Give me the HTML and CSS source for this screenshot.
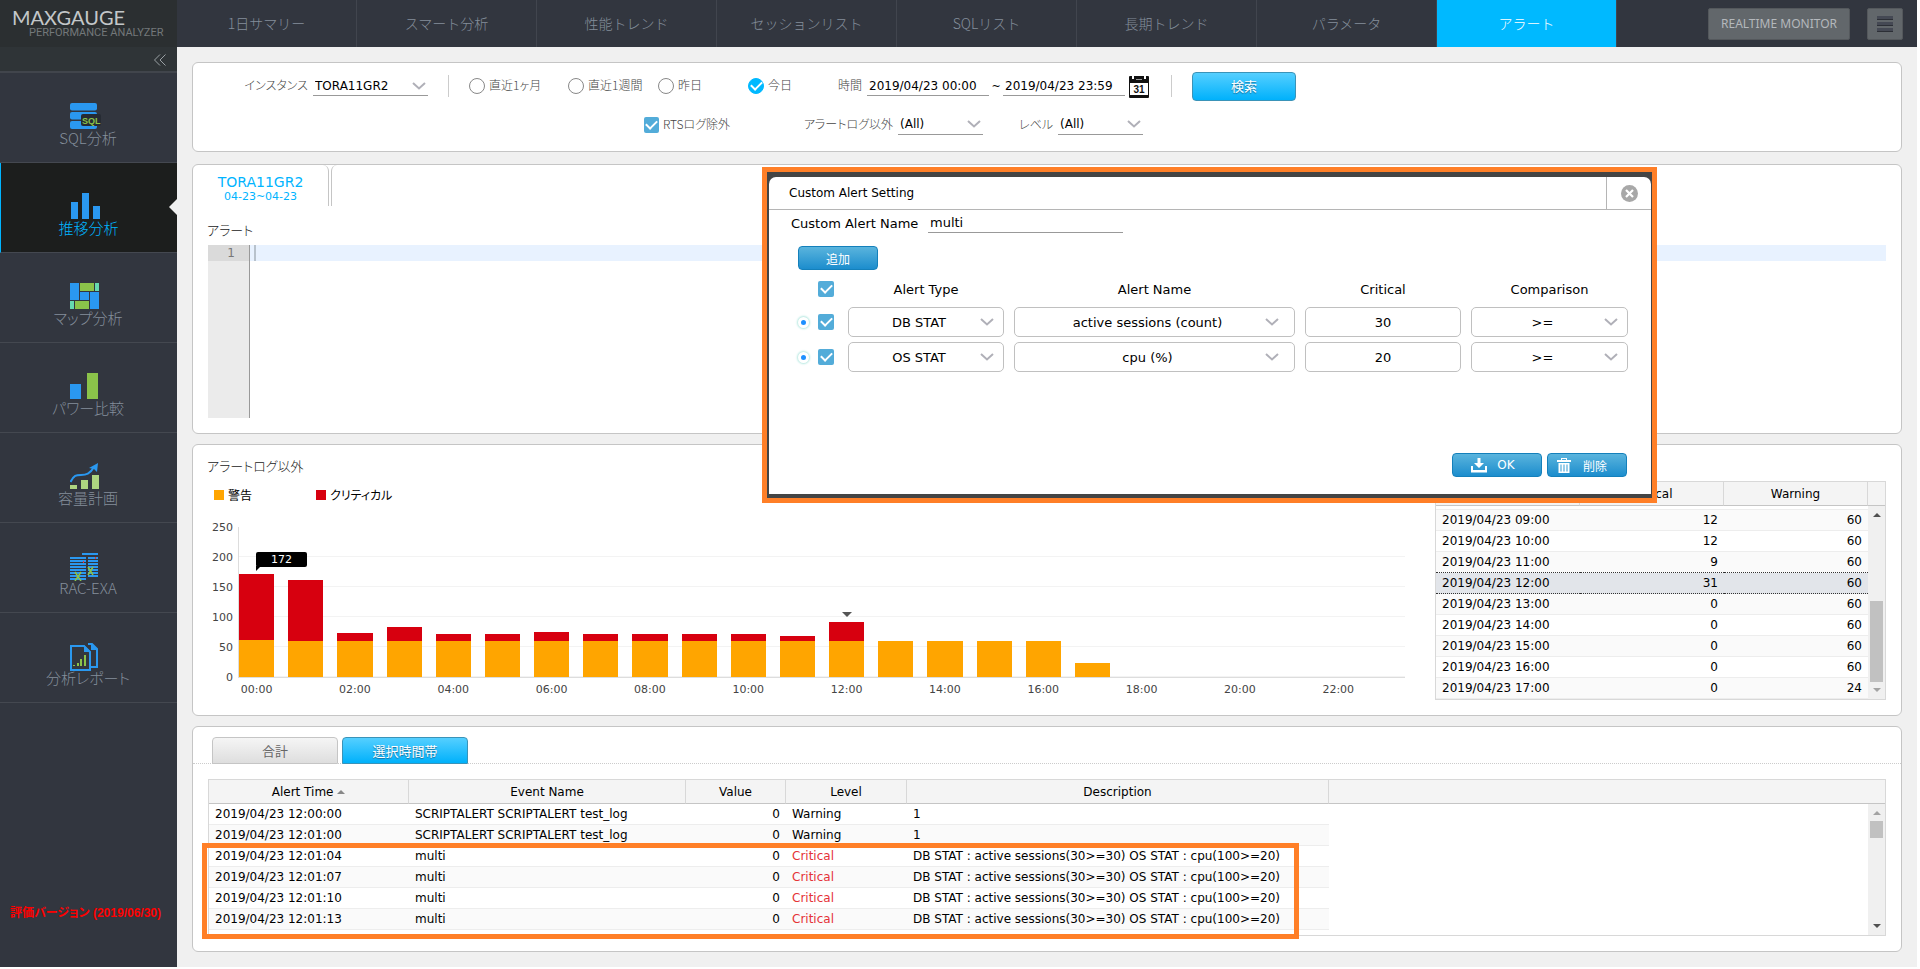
FILE: index.html
```
<!DOCTYPE html>
<html lang="ja">
  <head>
    <meta charset="UTF-8" />
    <meta name="viewport" content="width=device-width, initial-scale=1.0" />
    <title>MAXGAUGE Performance Analyzer</title>
    <link rel="stylesheet" href="styles.css">
  </head>
  <body>
    <div class="app">
      <aside class="sidebar">
        <div class="logo">
          <div class="logo-name">MAXGAUGE</div>
          <div class="logo-sub">PERFORMANCE ANALYZER</div>
        </div>
        <div class="collapse">
          <button class="collapse-button" aria-label="collapse">
            <svg width="12" height="12" viewBox="0 0 12 12" fill="none" stroke="#9aa0a4"><path d="M6 0.5L0.5 6L6 11.5M11.5 0.5L6 6L11.5 11.5" /></svg>
          </button>
        </div>
        <nav class="side-menu">
          <a href="#" class="side-item">
            <svg width="36" height="28" viewBox="0 0 36 28">
              <rect width="27" height="7.500" rx="2" fill="#2a98f0" />
              <rect y="9" width="27" height="7.500" rx="2" fill="#2a98f0" />
              <rect y="18" width="27" height="8" rx="2" fill="#2a98f0" />
              <rect x="11" y="11" width="20" height="12" rx="2" fill="#262b33" />
              <text x="12" y="21" font-size="9" font-family="Liberation Sans" font-weight="bold" fill="#8bc34a">SQL</text>
            </svg>
            SQL分析
          </a>
          <a href="#" class="side-item active">
            <svg width="36" height="28" viewBox="0 0 36 28" fill="#2a98f0">
              <rect y="9" width="7" height="17" /><rect x="11" width="7" height="26" /><rect x="22" y="13" width="7" height="13" />
            </svg>
            推移分析
          </a>
          <a href="#" class="side-item">
            <svg width="36" height="28" viewBox="0 0 36 28">
              <path fill="#2a98f0" d="M0 0h9v17H0zM10 9h9v8h-9zM20 9h9v17h-9z" />
              <path fill="#8bc34a" d="M10 0h14v8H10zM5 18h14v8H5z" />
              <path fill="#66d9b0" d="M25 0h4v8h-4zM0 18h4v8H0z" />
            </svg>
            マップ分析
          </a>
          <a href="#" class="side-item">
            <svg width="36" height="28" viewBox="0 0 36 28">
              <rect y="11" width="11" height="15" fill="#2a98f0" /><rect x="17" width="11" height="26" fill="#8bc34a" />
            </svg>
            パワー比較
          </a>
          <a href="#" class="side-item">
            <svg width="36" height="28" viewBox="0 0 36 28">
              <path fill="#aed581" d="M0 22h7v4H0zM11 17h7v9h-7zM22 12h7v14h-7z" />
              <path fill="none" stroke="#2a98f0" stroke-width="2" d="M0.500 19C4 12 6 12 11 12S20 11 24 4" />
              <path fill="#2a98f0" d="M28 0L27 9L24 6L19 5z" />
            </svg>
            容量計画
          </a>
          <a href="#" class="side-item">
            <svg width="36" height="28" viewBox="0 0 36 28">
              <path fill="#2a98f0" d="M12 0h16v2H12zM0 4h16v2H0zM0 7h16v2H0zM0 10h16v2H0zM0 13h16v2H0zM0 16h16v2H0zM0 19h16v2H0zM0 22h16v2H0zM0 25h16v2H0zM18 4h10v2H18zM18 7h10v2H18zM18 10h10v2H18zM18 13h10v2H18zM18 16h10v2H18zM18 19h10v2H18zM18 22h10v2H18z" />
              <path fill="none" stroke="#8bc34a" stroke-width="1.500" d="M5 19l6 9M11 19l-6 9M18 14l5 8M23 14l-5 8" />
              <path fill="#e53935" d="M13 8h1v2h-1zM25 4h1v2h-1z" />
            </svg>
            RAC-EXA
          </a>
          <a href="#" class="side-item">
            <svg width="36" height="28" viewBox="0 0 36 28">
              <path fill="none" stroke="#2a98f0" stroke-width="2" d="M1 3h13l6 6v18H1zM18 1h4l5 5v18h-6" />
              <path fill="#2a98f0" d="M14 2v7h7zM21 0v7h7z" />
              <path fill="#8bc34a" d="M3 22h2v1H3zM7 20h2v3H7zM10 16h2v7h-2zM14 12h2v11h-2z" />
            </svg>
            分析レポート
          </a>
        </nav>
        <p class="license">評価バージョン (2019/06/30)</p>
      </aside>

      <div class="content">
        <header class="topbar">
          <nav class="tabs">
            <a href="#">1日サマリー</a>
            <a href="#">スマート分析</a>
            <a href="#">性能トレンド</a>
            <a href="#">セッションリスト</a>
            <a href="#">SQLリスト</a>
            <a href="#">長期トレンド</a>
            <a href="#">パラメータ</a>
            <a href="#" class="active">アラート</a>
          </nav>
          <button class="top-button">REALTIME MONITOR</button>
          <button class="top-button menu-button" aria-label="menu"><i></i><i></i><i></i></button>
        </header>

        <main class="panels">
          <form class="panel filter">
            <div class="filter-row">
              <label class="filter-label first-label" for="instance">インスタンス</label>
              <select id="instance" class="line-select instance"><option>TORA11GR2</option></select>
              <span class="divider"></span>
              <label class="radio month"><input type="radio" name="range" /><span>直近1ヶ月</span></label>
              <label class="radio"><input type="radio" name="range" /><span>直近1週間</span></label>
              <label class="radio"><input type="radio" name="range" /><span>昨日</span></label>
              <label class="radio"><input type="radio" name="range" checked /><span>今日</span></label>
              <label class="filter-label" for="from">時間</label>
              <input id="from" class="line-input" value="2019/04/23 00:00" />
              <span class="tilde">~</span>
              <input aria-label="to" class="line-input to" value="2019/04/23 23:59" />
              <button type="button" class="calendar" aria-label="calendar">
                <svg width="20" height="23" viewBox="0 0 20 23">
                  <rect y="1" width="20" height="22" rx="1" fill="#111" />
                  <rect x="1" y="8" width="18" height="12" fill="#fff" />
                  <path fill="#fff" d="M3 0h2v4H3zM15 0h2v4h-2z" />
                  <path fill="#999" d="M7 4h6v1H7z" />
                  <text x="10" y="18" font-size="10" font-weight="bold" font-family="Liberation Sans" text-anchor="middle" fill="#111">31</text>
                </svg>
              </button>
              <span class="divider"></span>
              <button type="button" class="search-button">検索</button>
            </div>
            <div class="filter-row second">
              <label class="check rts"><input type="checkbox" checked /><span>RTSログ除外</span></label>
              <label class="filter-label log-label" for="log">アラートログ以外</label>
              <select id="log" class="line-select small"><option>(All)</option></select>
              <label class="filter-label level-label" for="level">レベル</label>
              <select id="level" class="line-select small"><option>(All)</option></select>
            </div>
          </form>

          <section class="panel alert-panel">
            <div class="instance-tabs">
              <a href="#" class="instance-tab">TORA11GR2<small>04-23~04-23</small></a>
              <span class="instance-rest"></span>
            </div>
            <h2>アラート</h2>
            <div class="editor">
              <div class="gutter"><span>1</span></div>
              <div class="code"><div class="active-line"></div></div>
            </div>
          </section>

          <section class="panel chart-panel">
            <div class="chart">
              <h2>アラートログ以外</h2>
              <div class="legend"><span class="warning">警告</span><span class="critical">クリティカル</span></div>
              <div class="chart-area">
                <div class="y-axis"><span>250</span><span>200</span><span>150</span><span>100</span><span>50</span><span>0</span></div>
                <div class="plot" id="plot"></div>
                <div class="x-axis" id="xAxis"></div>
              </div>
            </div>
            <div class="grid hour-grid">
              <table>
                <thead><tr><th>Time</th><th>Critical</th><th>Warning</th></tr></thead>
                <tbody>
                  <tr class="cut"><td></td><td></td><td></td></tr>
                  <tr><td>2019/04/23 09:00</td><td>12</td><td>60</td></tr>
                  <tr><td>2019/04/23 10:00</td><td>12</td><td>60</td></tr>
                  <tr><td>2019/04/23 11:00</td><td>9</td><td>60</td></tr>
                  <tr class="selected"><td>2019/04/23 12:00</td><td>31</td><td>60</td></tr>
                  <tr><td>2019/04/23 13:00</td><td>0</td><td>60</td></tr>
                  <tr><td>2019/04/23 14:00</td><td>0</td><td>60</td></tr>
                  <tr><td>2019/04/23 15:00</td><td>0</td><td>60</td></tr>
                  <tr><td>2019/04/23 16:00</td><td>0</td><td>60</td></tr>
                  <tr><td>2019/04/23 17:00</td><td>0</td><td>24</td></tr>
                </tbody>
              </table>
              <div class="scroll">
                <div class="scroll-head"></div>
                <div class="scroll-track at-end"><i class="up"></i><b></b><i class="down"></i></div>
              </div>
            </div>
          </section>

          <section class="panel log-panel">
            <div class="log-tabs">
              <button class="log-tab">合計</button>
              <button class="log-tab active">選択時間帯</button>
            </div>
            <div class="grid log-grid">
              <table>
                <thead>
                  <tr><th class="c-time">Alert Time <i class="sort"></i></th><th class="c-event">Event Name</th><th class="c-value">Value</th><th class="c-level">Level</th><th class="c-desc">Description</th><th class="rest"></th></tr>
                </thead>
                <tbody>
                  <tr><td>2019/04/23 12:00:00</td><td>SCRIPTALERT SCRIPTALERT test_log</td><td>0</td><td>Warning</td><td>1</td><td class="rest"></td></tr>
                  <tr><td>2019/04/23 12:01:00</td><td>SCRIPTALERT SCRIPTALERT test_log</td><td>0</td><td>Warning</td><td>1</td><td class="rest"></td></tr>
                  <tr class="crit"><td>2019/04/23 12:01:04</td><td>multi</td><td>0</td><td>Critical</td><td>DB STAT : active sessions(30&gt;=30) OS STAT : cpu(100&gt;=20)</td><td class="rest"></td></tr>
                  <tr class="crit"><td>2019/04/23 12:01:07</td><td>multi</td><td>0</td><td>Critical</td><td>DB STAT : active sessions(30&gt;=30) OS STAT : cpu(100&gt;=20)</td><td class="rest"></td></tr>
                  <tr class="crit"><td>2019/04/23 12:01:10</td><td>multi</td><td>0</td><td>Critical</td><td>DB STAT : active sessions(30&gt;=30) OS STAT : cpu(100&gt;=20)</td><td class="rest"></td></tr>
                  <tr class="crit"><td>2019/04/23 12:01:13</td><td>multi</td><td>0</td><td>Critical</td><td>DB STAT : active sessions(30&gt;=30) OS STAT : cpu(100&gt;=20)</td><td class="rest"></td></tr>
                </tbody>
              </table>
              <div class="scroll">
                <div class="scroll-head"></div>
                <div class="scroll-track"><i class="up"></i><b></b><i class="down"></i></div>
              </div>
              <div class="highlight"></div>
            </div>
          </section>
        </main>
      </div>

      <!-- Custom alert dialog -->
      <div class="dialog-frame">
        <form class="dialog" role="dialog" aria-labelledby="dialogTitle">
          <div class="dialog-head">
            <span id="dialogTitle">Custom Alert Setting</span>
            <button type="button" class="close" aria-label="close">
              <svg width="17" height="17" viewBox="0 0 17 17"><circle cx="8.500" cy="8.500" r="8.500" fill="#a8a8a8" /><path stroke="#fff" stroke-width="2.200" d="M5 5l7 7M12 5l-7 7" /></svg>
            </button>
          </div>
          <div class="dialog-body">
            <div class="name-row">
              <label for="alertName">Custom Alert Name</label>
              <input id="alertName" class="line-input" value="multi" />
            </div>
            <div class="dialog-content">
              <button type="button" class="blue-button add">追加</button>
              <div class="rule-row rule-head">
                <span></span>
                <input type="checkbox" aria-label="all" checked />
                <span>Alert Type</span><span>Alert Name</span><span>Critical</span><span>Comparison</span>
              </div>
              <div class="rule-row">
                <span class="dot"></span>
                <input type="checkbox" aria-label="rule 1" checked />
                <select class="box" aria-label="Alert Type"><option>DB STAT</option></select>
                <select class="box wide" aria-label="Alert Name"><option>active sessions (count)</option></select>
                <input class="box" aria-label="Critical" value="30" />
                <select class="box" aria-label="Comparison"><option>&gt;=</option></select>
              </div>
              <div class="rule-row">
                <span class="dot"></span>
                <input type="checkbox" aria-label="rule 2" checked />
                <select class="box" aria-label="Alert Type"><option>OS STAT</option></select>
                <select class="box wide" aria-label="Alert Name"><option>cpu (%)</option></select>
                <input class="box" aria-label="Critical" value="20" />
                <select class="box" aria-label="Comparison"><option>&gt;=</option></select>
              </div>
            </div>
            <div class="dialog-actions">
              <button type="button" class="blue-button ok">
                <svg width="16" height="15" viewBox="0 0 16 15" fill="#fff"><path d="M6.500 0h3v5H13L8 10L3 5h3.500zM0 8h2v4h12V8h2v6.500H0z" /></svg>
                OK
              </button>
              <button type="button" class="blue-button delete">
                <svg width="14" height="15" viewBox="0 0 14 15" fill="#fff"><path d="M4 0h6v2h4v2H0V2h4zM5 1v1h4V1zM1.500 5h11v10h-11zM3.500 6.500v7h1v-7zM6.500 6.500v7h1v-7zM9.500 6.500v7h1v-7z" fill-rule="evenodd" /></svg>
                削除
              </button>
            </div>
          </div>
        </form>
      </div>
    </div>
    <script src="script.js"></script>
  </body>
</html>
```
FILE: styles.css
```
* {
  box-sizing: border-box;
}

body {
  margin: 0;
  background: #fff;
  color: #000;
  font: 11px "DejaVu Sans", "Noto Sans CJK JP", sans-serif;
}

button,
input,
select {
  font: inherit;
  color: inherit;
  margin: 0;
}

button {
  padding: 0;
  border: none;
  background: none;
  cursor: pointer;
}

a {
  color: inherit;
  text-decoration: none;
}

h2 {
  margin: 0;
  font-size: 13px;
  line-height: 20px;
  font-weight: 300;
  color: #222;
}

.app {
  position: relative;
  display: flex;
  margin: 0 3px 2px 0;
  min-height: calc(100vh - 2px);
  background: #f0f0f0;
}

/* proportional kana */
body .app * {
  font-feature-settings: "palt";
}

/* Sidebar */
.sidebar {
  flex: none;
  display: flex;
  flex-direction: column;
  width: 177px;
  background: #32363f;
}

.logo {
  height: 47px;
  padding: 7px 0 0 12px;
  background: #2b2f31;
  color: #c3c7c9;
}

.logo-name {
  font: 20px/20px Lato, sans-serif;
}

.logo-sub {
  padding-left: 17px;
  font: 11px/12px Roboto, sans-serif;
  color: #73787a;
}

.collapse {
  height: 26px;
  padding: 7px 11px 0 0;
  text-align: right;
  background: #2f3437;
  border-bottom: 2px solid #41454c;
}

.collapse-button {
  display: block;
  margin-left: auto;
}

.side-item {
  position: relative;
  display: flex;
  flex-direction: column;
  align-items: center;
  height: 90px;
  padding-top: 30px;
  padding-right: 1px;
  border-bottom: 1px solid #444850;
  color: #848e9b;
  font: 300 15px/20px "Noto Sans CJK JP", sans-serif;
}

.side-item svg {
  flex: none;
  margin-bottom: -3px;
}

.side-item.active {
  background: #1c1e1d;
  border-left: 1px solid #00b4ff;
  color: #00b4ff;
}

.side-item.active::after {
  content: "";
  position: absolute;
  right: 0;
  top: 36px;
  border: 8px solid transparent;
  border-left: none;
  border-right-color: #f0f0f0;
}

.license {
  margin: auto 0 46px 10px;
  font: bold 12px/16px "Liberation Sans", "Noto Sans CJK JP", sans-serif;
  color: #f00;
}

/* Top bar */
.content {
  flex: 1;
  min-width: 0;
}

.topbar {
  display: flex;
  align-items: center;
  height: 47px;
  padding-right: 14px;
  background: #32363f;
}

.tabs {
  display: flex;
  margin-right: auto;
}

.tabs a {
  width: 180px;
  border-right: 1px solid #41454e;
  font: 300 14px/46px "Noto Sans CJK JP", sans-serif;
  height: 47px;
  text-align: center;
  color: #848e9b;
}

.tabs a.active {
  background: #00b9ff;
  color: #fff;
}

.top-button {
  height: 32px;
  width: 142px;
  border: 1px solid #54585c;
  border-radius: 2px;
  background: #62676b;
  color: #b4b8bc;
  font: 12px "Noto Sans", sans-serif;
}

.menu-button {
  width: 36px;
  margin-left: 17px;
}

.menu-button i {
  display: block;
  width: 16px;
  height: 4px;
  margin: 2px auto;
  background: #454954;
  border-bottom: 1px solid #2c2f36;
}

/* Panels */
.panels {
  padding: 15px 15px 0;
}

.panel {
  border: 1px solid #c5c5c5;
  border-radius: 6px;
  background: #fff;
}

.filter {
  height: 90px;
  padding-top: 8px;
  margin-bottom: 12px;
}

.filter-row {
  display: flex;
  align-items: center;
  height: 30px;
}

.filter-row.second {
  height: 25px;
  margin-top: 11px;
}

.filter-label,
.radio,
.check {
  font: 300 12px/16px "Noto Sans CJK JP", sans-serif;
  color: #444;
  white-space: nowrap;
}

.filter-label,
.radio span,
.check span {
  margin-bottom: 2px;
}

.filter-label {
  margin-right: 5px;
  text-align: right;
}

.first-label {
  width: 115px;
}

.line-select,
.line-input {
  height: 20px;
  padding: 0 2px;
  border: none;
  border-bottom: 1px solid #999;
  border-radius: 0;
  background: transparent;
  outline: none;
  font-size: 12px;
}

.line-input {
  width: 122px;
}

select {
  appearance: none;
  outline: none;
}

.line-select,
select.box {
  background: #fff url("data:image/svg+xml,%3Csvg xmlns='http://www.w3.org/2000/svg' width='14' height='8' fill='none' stroke='%23b0b0b8' stroke-width='2'%3E%3Cpath d='M1 1l6 5.500l6-5.500'/%3E%3C/svg%3E") no-repeat right 2px center;
}

.instance {
  width: 115px;
}

.small {
  width: 85px;
}

.divider {
  width: 1px;
  height: 22px;
  margin: 0 20px;
  background: #ccc;
}

.radio {
  display: flex;
  align-items: center;
  gap: 4px;
  width: 90px;
}

.radio.month {
  width: 99px;
}

input[type="radio"] {
  appearance: none;
  width: 16px;
  height: 16px;
  border: 1px solid #888;
  border-radius: 50%;
  background: #fff;
}

input[type="radio"]:checked {
  border-color: #00b9ff;
  background: #00b9ff;
}

input[type="checkbox"] {
  appearance: none;
  width: 16px;
  height: 16px;
  border-radius: 2px;
  background: #53acd9;
}

input[type="checkbox"]:checked,
input[type="radio"]:checked {
  display: grid;
  place-items: center;
}

input[type="checkbox"]:checked::after,
input[type="radio"]:checked::after {
  content: "";
  width: 9px;
  height: 5px;
  margin-bottom: 3px;
  border: solid #fff;
  border-width: 0 0 2px 2px;
  transform: rotate(-45deg);
}

.check {
  display: flex;
  align-items: center;
  gap: 4px;
}

.rts {
  width: 86px;
  margin-left: 451px;
}

.log-label {
  width: 163px;
}

.level-label {
  width: 70px;
}

.tilde {
  width: 14px;
  text-align: center;
}

.calendar {
  display: flex;
  margin: 0 2px 0 4px;
}

.search-button {
  width: 104px;
  height: 29px;
  padding-bottom: 2px;
  border: 1px solid #3a93b8;
  border-radius: 4px;
  background: linear-gradient(#55cfff, #00b1fb);
  color: #fff;
  font: 13px "Noto Sans CJK JP", sans-serif;
  text-shadow: 0 1px 1px #1b6f99;
}

.alert-panel {
  height: 270px;
  margin-bottom: 10px;
}

.instance-tabs {
  display: flex;
  gap: 2px;
  height: 41px;
}

.instance-tab {
  width: 136px;
  padding-top: 9px;
  border-right: 1px solid #c5c5c5;
  border-top-right-radius: 6px;
  text-align: center;
  font-size: 14px;
  line-height: 16px;
  color: #00b4ff;
}

.instance-tab small {
  display: block;
  font-size: 11px;
  line-height: 14px;
}

.instance-rest {
  flex: 1;
  border-left: 1px solid #c5c5c5;
  border-top-left-radius: 6px;
}

.alert-panel h2 {
  margin: 15px 0 4px 14px;
}

.editor {
  display: flex;
  height: 173px;
  margin: 0 15px;
}

.gutter {
  width: 42px;
  border-right: 1px solid #999;
  background: #ebebeb;
}

.gutter span {
  display: block;
  padding-right: 14px;
  background: #dadada;
  color: #777;
  text-align: right;
  font-size: 12px;
  line-height: 16px;
}

.code {
  flex: 1;
}

.active-line {
  height: 16px;
  padding-left: 4px;
  background: #e8f2ff;
}

.active-line::before {
  content: "";
  display: block;
  width: 2px;
  height: 16px;
  background: #b8c2cc;
}

/* Chart */
.chart-panel {
  display: flex;
  align-items: flex-start;
  height: 272px;
  margin-bottom: 10px;
  padding-right: 15px;
}

.chart {
  flex: 1;
  padding: 12px 30px 0 14px;
}

.legend {
  display: flex;
  height: 18px;
  margin: 9px 0 23px 7px;
  font: 12px/18px "Noto Sans CJK JP", sans-serif;
}

.legend span {
  display: flex;
  align-items: center;
  gap: 4px;
  width: 102px;
}

.legend span::before {
  content: "";
  width: 10px;
  height: 10px;
  background: #ffa500;
}

.legend .critical::before {
  background: #d7000f;
}

.chart-area {
  display: grid;
  grid-template-columns: 26px 1fr;
  column-gap: 5px;
  color: #444;
}

.y-axis {
  display: flex;
  flex-direction: column;
  justify-content: space-between;
  height: 164px;
  margin: -6px 0 -7px;
  text-align: right;
  line-height: 14px;
}

.plot {
  display: grid;
  grid-template-columns: repeat(24, 1fr);
  gap: 14px;
  height: 151px;
  border-left: 1px solid #ddd;
  border-bottom: 1px solid #ddd;
  background: linear-gradient(transparent 29px, #f3f3f3 29px) 0 0 / 100% 30px;
}

.bar {
  position: relative;
  display: flex;
  flex-direction: column;
  justify-content: flex-end;
}

.bar .critical {
  background: #d7000f;
}

.bar .warning {
  background: #ffa500;
}

.tip {
  position: absolute;
  left: 17px;
  top: 25px;
  width: 51px;
  border-radius: 2px;
  background: #000;
  color: #fff;
  line-height: 15px;
  text-align: center;
}

.tip::after {
  content: "";
  position: absolute;
  left: 0;
  top: 14px;
  border-top: 5px solid #000;
  border-right: 5px solid transparent;
}

.marker {
  align-self: center;
  margin-bottom: 5px;
  border: 5px solid transparent;
  border-top-color: #555;
  border-bottom: none;
}

.x-axis {
  grid-column: 2;
  display: grid;
  grid-template-columns: repeat(24, 1fr);
  gap: 14px;
  padding: 5px 0 0 1px;
  line-height: 14px;
}

.x-axis span {
  display: flex;
  justify-content: center;
  min-width: 0;
  white-space: nowrap;
}

/* Grids */
.grid {
  position: relative;
  display: flex;
  border: 1px solid #d8d8d8;
  font-size: 12px;
}

.grid table {
  width: 100%;
  table-layout: fixed;
  border-collapse: separate;
  border-spacing: 0;
}

.grid th {
  height: 24px;
  padding: 0;
  background: #f4f4f4;
  border-right: 1px solid #d8d8d8;
  border-bottom: 1px solid #c5c5c5;
  font-weight: normal;
}

.grid td {
  height: 21px;
  padding: 0 6px;
  border-bottom: 1px solid #ededed;
  line-height: 16px;
  white-space: nowrap;
}

.scroll {
  flex: none;
  display: flex;
  flex-direction: column;
  width: 17px;
}

.scroll-head {
  height: 24px;
  border-bottom: 1px solid #c5c5c5;
  background: #f4f4f4;
}

.scroll-track {
  flex: 1;
  display: flex;
  flex-direction: column;
  align-items: center;
  background: #f0f0f0;
}

.scroll-track b {
  width: 13px;
  height: 17px;
  margin-top: 6px;
  background: #c1c1c1;
}

.scroll-track i {
  border: 4px solid transparent;
}

.scroll-track .up {
  margin-top: 7px;
  border-top: none;
  border-bottom-color: #a3a3a3;
}

.scroll-track .down {
  margin: auto 0 7px;
  border-bottom: none;
  border-top-color: #505050;
}

.at-end b {
  height: 81px;
  margin-top: auto;
}

.at-end .up {
  border-bottom-color: #505050;
}

.at-end .down {
  margin-top: 6px;
  border-top-color: #a3a3a3;
}

.hour-grid {
  width: 451px;
  height: 219px;
  margin-top: 36px;
}

.hour-grid td:not(:first-child) {
  text-align: right;
}

.hour-grid .cut td {
  height: 4px;
}

.hour-grid tr:nth-child(even) td {
  background: #fafafa;
}

.hour-grid .selected td {
  border-bottom: 1px dotted #333;
  background: #e2e5ea;
}

.hour-grid tr:has(+ .selected) td {
  border-bottom: 1px dotted #333;
}

.log-panel {
  height: 226px;
}

.log-tabs {
  display: flex;
  gap: 4px;
  height: 37px;
  margin-bottom: 15px;
  padding: 10px 19px 0;
  border-bottom: 1px dotted #ccc;
}

.log-tab {
  width: 126px;
  height: 27px;
  padding-bottom: 1px;
  border: 1px solid #c5c5c5;
  border-radius: 4px 4px 0 0;
  background: linear-gradient(#f5f5f5, #dedede);
  color: #666;
  font: 13px "Noto Sans CJK JP", sans-serif;
}

.log-tab.active {
  border-color: #3a93b8;
  background: linear-gradient(#55cfff, #00b1fb);
  color: #fff;
  text-shadow: 0 1px 1px #1b6f99;
}

.log-grid {
  height: 157px;
  margin: 0 15px;
  align-items: stretch;
}

.log-grid table {
  align-self: flex-start;
}

.log-grid tr:nth-child(even) td:not(.rest) {
  background: #fafafa;
}

.log-grid td.rest {
  border: none;
}

.log-grid th.rest {
  border-right: none;
}

.log-grid td:nth-child(3) {
  text-align: right;
}

.c-time {
  width: 200px;
}

.c-event {
  width: 277px;
}

.c-value {
  width: 100px;
}

.c-level {
  width: 121px;
}

.c-desc {
  width: 422px;
}

.sort {
  display: inline-block;
  margin-bottom: 2px;
  border: 4px solid transparent;
  border-top: none;
  border-bottom-color: #888;
}

.crit td:nth-child(4) {
  color: #e53238;
}

.highlight {
  position: absolute;
  left: -7px;
  top: 63px;
  width: 1097px;
  height: 96px;
  border: 5px solid #ff7f27;
}

/* Dialog */
.dialog-frame {
  position: absolute;
  left: 762px;
  top: 167px;
  width: 895px;
  height: 336px;
  padding: 5px 1px 4px 2px;
  border: 5px solid #ff7f27;
  background: #444;
}

.dialog {
  height: 100%;
  border-radius: 7px 7px 0 0;
  background: #fff;
}

.dialog-head {
  display: flex;
  justify-content: space-between;
  height: 33px;
  padding-left: 20px;
  border-bottom: 1px solid #b5b5b5;
  font-size: 12px;
  line-height: 33px;
}

.close {
  display: grid;
  place-items: center;
  width: 45px;
  border-left: 1px solid #b5b5b5;
}

.dialog-body {
  display: flex;
  flex-direction: column;
  height: 284px;
  padding-bottom: 17px;
}

.name-row {
  display: flex;
  align-items: center;
  gap: 5px;
  height: 26px;
  padding-left: 22px;
  font-size: 13px;
}

.name-row label {
  width: 132px;
}

.name-row .line-input {
  width: 195px;
  font-size: 13px;
}

.dialog-content {
  padding: 10px 22px 0 29px;
}

.blue-button {
  display: flex;
  align-items: center;
  justify-content: center;
  height: 24px;
  border: 1px solid #1480bb;
  border-radius: 4px;
  background: linear-gradient(#5ab4dd, #1c8dcd);
  color: #fff;
  font: 12px "DejaVu Sans", "Noto Sans CJK JP", sans-serif;
}

.add {
  width: 80px;
}

.rule-row {
  display: grid;
  grid-template-columns: 10px 20px 156px 281px 156px 157px;
  gap: 10px;
  align-items: center;
  height: 30px;
  margin-bottom: 5px;
  font-size: 13px;
}

.rule-head {
  margin: 4px 0 3px;
  text-align: center;
}

.dot {
  width: 11px;
  height: 11px;
  border: 3px solid #fff;
  border-radius: 50%;
  background: #1e90ff;
  box-shadow: 0 0 2px 1px #b5e8e0;
}

.box {
  width: 100%;
  height: 30px;
  padding: 0 12px;
  border: 1px solid #c0c0c0;
  border-radius: 5px;
  text-align: center;
  text-align-last: center;
}

select.box {
  padding-right: 26px;
  background-position: right 9px center;
}

select.wide {
  background-position: right 15px center;
}

.dialog-actions {
  display: flex;
  justify-content: flex-end;
  gap: 5px;
  margin: auto 24px 0 0;
}

.ok {
  gap: 10px;
  width: 90px;
  padding-right: 8px;
}

.delete {
  gap: 12px;
  width: 80px;
  padding-right: 10px;
}
```
FILE: script.js
```
// [warning, critical] per hour
const hours = [
  [61, 111], [60, 101], [60, 13], [60, 23], [60, 12], [60, 12],
  [60, 15], [60, 12], [60, 12], [60, 12], [60, 12], [60, 9],
  [60, 31], [60, 0], [60, 0], [60, 0], [60, 0], [24, 0],
  [0, 0], [0, 0], [0, 0], [0, 0], [0, 0], [0, 0],
];
const MAX = 250;
const selectedHour = 12;

const plot = document.getElementById("plot");
const xAxis = document.getElementById("xAxis");

hours.forEach(([warning, critical], hour) => {
  const bar = document.createElement("div");
  bar.className = "bar";
  bar.innerHTML =
    (hour === selectedHour ? '<div class="marker"></div>' : "") +
    `<div class="critical" style="height: ${(critical / MAX) * 100}%"></div>` +
    `<div class="warning" style="height: ${(warning / MAX) * 100}%"></div>` +
    (hour === 0 ? `<div class="tip">${warning + critical}</div>` : "");
  plot.appendChild(bar);

  const label = document.createElement("span");
  if (hour % 2 === 0) {
    label.textContent = String(hour).padStart(2, "0") + ":00";
  }
  xAxis.appendChild(label);
});
```
